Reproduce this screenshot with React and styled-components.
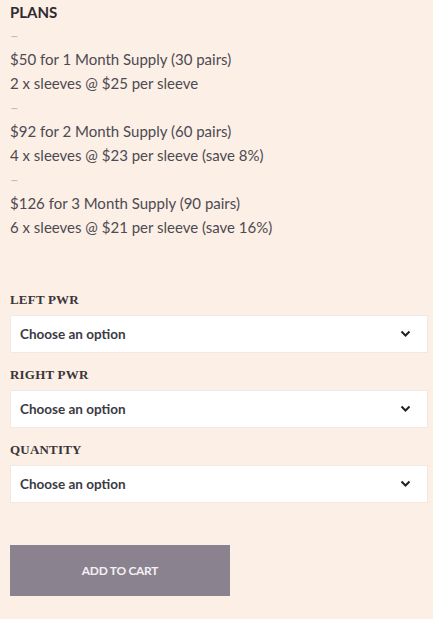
import React from 'react';
import styled, { createGlobalStyle } from 'styled-components';

const Global = createGlobalStyle`
  html, body {
    margin: 0;
    padding: 0;
    background: #fcefe6;
  }
  body {
    font-family: Lato, "Open Sans", sans-serif;
  }
`;

const Page = styled.div`
  width: 433px;
  height: 619px;
  box-sizing: border-box;
  padding: 2px 5px 0 10px;
  background: #fcefe6;
  color: #4a4650;
`;

const Title = styled.div`
  font-family: Lato, sans-serif;
  font-weight: 700;
  font-size: 15px;
  line-height: 20px;
  color: #2f2a30;
  margin-bottom: 1px;
`;

const Line = styled.div`
  font-size: 15px;
  line-height: 24px;
  color: ${p => (p.dash ? '#c4bcb8' : '#4d4a52')};
  height: 24px;
`;

const Form = styled.div`
  margin-top: 53px;
  display: flex;
  flex-direction: column;
`;

const Label = styled.div`
  font-family: "Liberation Serif", "DejaVu Serif", serif;
  font-weight: 700;
  font-size: 13px;
  letter-spacing: 0.2px;
  color: #3a3538;
  line-height: 16px;
  margin-bottom: 7px;
`;

const Select = styled.div`
  height: 38px;
  box-sizing: border-box;
  background: #fff;
  border: 1px solid #f1e9e4;
  display: flex;
  align-items: center;
  justify-content: space-between;
  padding: 0 16px 0 9px;
  margin-bottom: 14px;
  font-family: Lato, sans-serif;
  font-weight: 700;
  font-size: 13.5px;
  color: #3b3a44;
`;

const Button = styled.button`
  margin-top: 28px;
  width: 220px;
  height: 51px;
  border: none;
  background: #8a838f;
  color: #f4f0f4;
  font-family: Lato, sans-serif;
  font-weight: 700;
  font-size: 12px;
  letter-spacing: -0.3px;
  cursor: pointer;
`;

const Chevron = () => (
  <svg width="11" height="8" viewBox="0 0 11 8">
    <path d="M1.5 1.5 L5.5 5.5 L9.5 1.5" fill="none" stroke="#222" strokeWidth="2" />
  </svg>
);

const lines = [
  ['–', true],
  ['$50 for 1 Month Supply (30 pairs)'],
  ['2 x sleeves @ $25 per sleeve'],
  ['–', true],
  ['$92 for 2 Month Supply (60 pairs)'],
  ['4 x sleeves @ $23 per sleeve (save 8%)'],
  ['–', true],
  ['$126 for 3 Month Supply (90 pairs)'],
  ['6 x sleeves @ $21 per sleeve (save 16%)'],
];

const fields = ['LEFT PWR', 'RIGHT PWR', 'QUANTITY'];

export default function App() {
  return (
    <Page>
      <Global />
      <Title>PLANS</Title>
      {lines.map(([t, d], i) => (
        <Line key={i} dash={d}>{t}</Line>
      ))}
      <Form>
        {fields.map(f => (
          <React.Fragment key={f}>
            <Label>{f}</Label>
            <Select>
              <span>Choose an option</span>
              <Chevron />
            </Select>
          </React.Fragment>
        ))}
      </Form>
      <Button>ADD TO CART</Button>
    </Page>
  );
}
